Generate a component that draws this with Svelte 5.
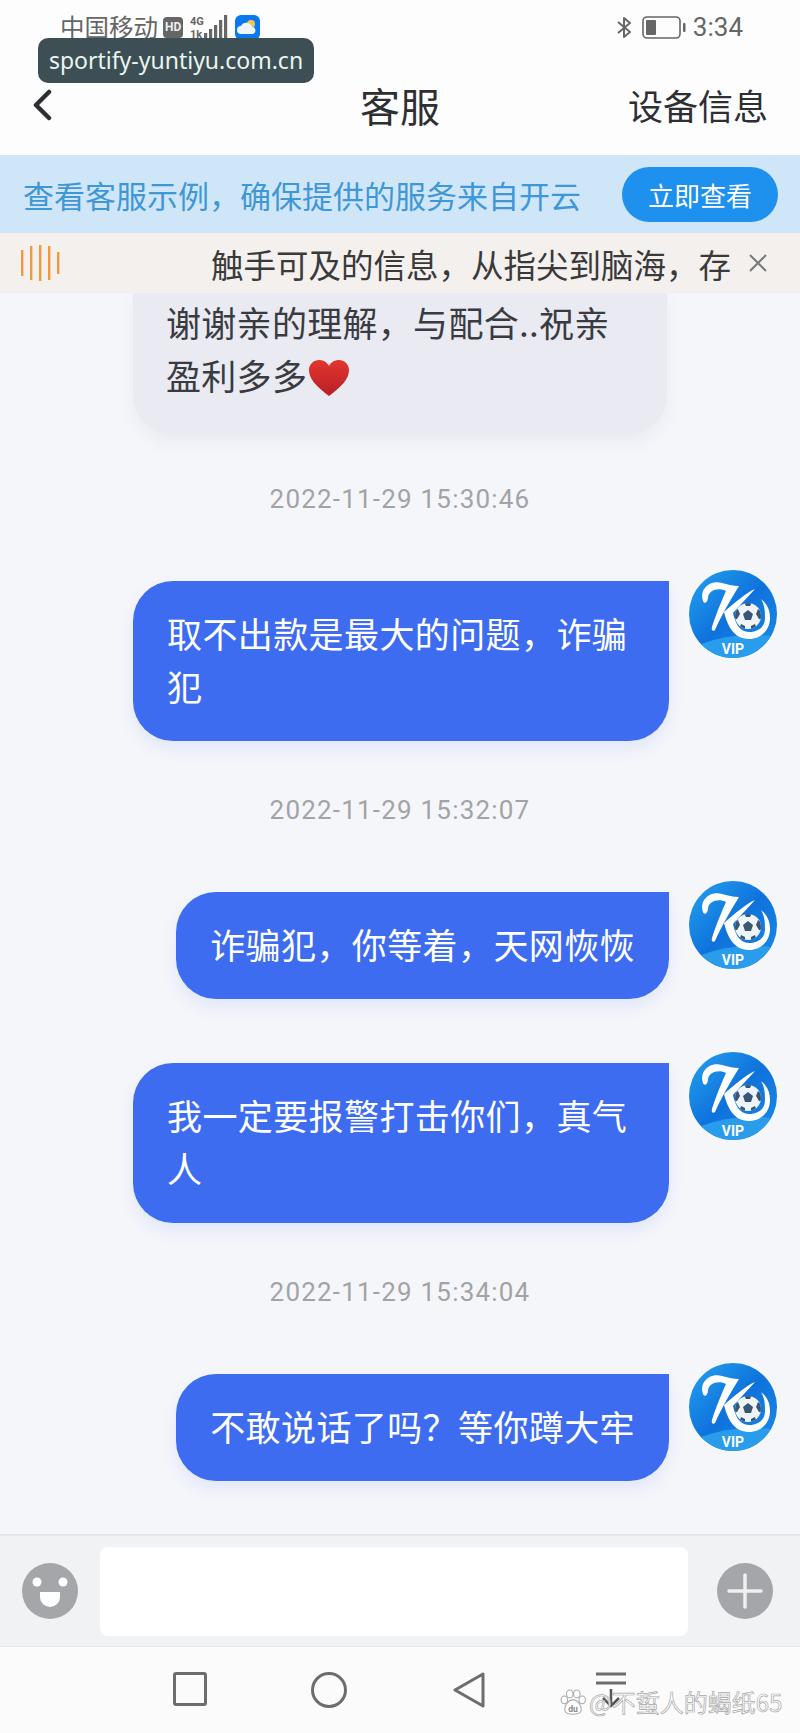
<script>
    const messages = [
        { time: "2022-11-29 15:30:46" },
        { text: "取不出款是最大的问题\uFF0C诈骗犯" },
        { time: "2022-11-29 15:32:07" },
        { text: "诈骗犯\uFF0C你等着\uFF0C天网恢恢" },
        { text: "我一定要报警打击你们\uFF0C真气人" },
        { time: "2022-11-29 15:34:04" },
        { text: "不敢说话了吗\uFF1F等你蹲大牢" }
    ];
    const waveBars = [
        [1, 5, 26], [10, 1, 34], [19, 0, 36], [28, 1, 34], [37, 7, 22]
    ];
</script>

{#snippet avatar()}
    <svg class="avatar" viewBox="0 0 88 88">
        <defs>
            <linearGradient id="avatar-bg" x1="0" y1="0" x2="1" y2="1">
                <stop offset="0" stop-color="#25a2ee" />
                <stop offset="0.5" stop-color="#0f72dc" />
                <stop offset="1" stop-color="#1a8ce8" />
            </linearGradient>
            <clipPath id="ball-clip"><circle cx="59" cy="46" r="13" /></clipPath>
        </defs>
        <circle cx="44" cy="44" r="44" fill="url(#avatar-bg)" />
        <path d="M12 74 Q44 62 82 66 Q68 88 44 88 Q26 88 12 74Z" fill="#2a9cec" />
        <path d="M14 31 C10 18 22 10 33 13 C38 14.5 44 16 50 16 C44 26 34 42 26 60 C24 62 22 60 23 57 C27 44 33 30 37 21 C30 17 19 20 19 28 C18.5 33 15 34 14 31Z" fill="#fff" />
        <path d="M66 19 C58 22 44 34 35 42 C38 54 44 69 60 69 C72 69 81 60 81 48 C81 40 78 34 72 29 C76 36 76 42 76 48 C76 57 69 62 60 62 C50 62 46 52 44 43 C50 36 58 28 66 19Z" fill="#fff" />
        <circle cx="59" cy="46" r="13" fill="#eef3f7" />
        <g fill="#3a5573" clip-path="url(#ball-clip)">
            <polygon points="59,40 64,44 62,50 56,50 54,44" />
            <polygon points="55,32 63,32 61,36 57,36" />
            <polygon points="45,42 49,39 51,44 48,49 45,49" />
            <polygon points="73,42 69,39 67,44 70,49 73,49" />
            <polygon points="50,60 52,54 56,56 56,60" />
            <polygon points="68,60 66,54 62,56 62,60" />
        </g>
        <text class="vip" x="44" y="84" text-anchor="middle">VIP</text>
    </svg>
{/snippet}

<div class="page">
    <div class="top">
        <div class="status">
            <div class="status-left">
                <span class="carrier">中国移动</span>
                <span class="hd">HD</span>
                <svg class="signal" width="38" height="24" viewBox="0 0 38 24">
                    <text class="net" x="0" y="10">4G</text>
                    <text class="net" x="0" y="23">1k</text>
                    <rect x="14" y="18" width="3.2" height="5" fill="#666" />
                    <rect x="19" y="14" width="3.2" height="9" fill="#666" />
                    <rect x="24" y="10" width="3.2" height="13" fill="#666" />
                    <rect x="29" y="5" width="3.2" height="18" fill="#666" />
                    <rect x="34" y="0" width="3.2" height="23" fill="#666" />
                </svg>
                <svg class="weather" width="25" height="25" viewBox="0 0 25 25">
                    <rect width="25" height="25" rx="6" fill="#0a78ee" />
                    <circle cx="16" cy="9" r="4" fill="#f3c558" />
                    <path d="M6 19 a4 4 0 0 1 0-8 a6 6 0 0 1 11 1 a3.6 3.6 0 0 1 1 7Z" fill="#eef5fb" />
                </svg>
            </div>
            <div class="status-right">
                <svg width="17" height="23" viewBox="0 0 17 23">
                    <path d="M2 6 L14 16 L8 21 V2 L14 7 L2 17" fill="none" stroke="#666" stroke-width="2" stroke-linejoin="round" />
                </svg>
                <svg width="44" height="23" viewBox="0 0 44 23">
                    <rect x="1" y="1" width="37" height="21" rx="4" fill="none" stroke="#666" stroke-width="1.6" />
                    <rect x="4" y="4" width="10" height="15" rx="1" fill="#666" />
                    <rect x="41" y="7" width="2.5" height="9" rx="1" fill="#666" />
                </svg>
                <span class="clock">3:34</span>
            </div>
        </div>
        <div class="header">
            <svg class="back" width="20" height="32" viewBox="0 0 20 32">
                <path d="M17 3 L4 16 L17 29" fill="none" stroke="#2d2f33" stroke-width="4.5" stroke-linecap="round" stroke-linejoin="round" />
            </svg>
            <span class="title">客服</span>
            <span class="device">设备信息</span>
        </div>
        <div class="url-badge">sportify-yuntiyu.com.cn</div>
    </div>

    <div class="banner">
        <span class="banner-text">查看客服示例&#xFF0C;确保提供的服务来自开云</span>
        <button class="banner-btn">立即查看</button>
    </div>

    <div class="notice">
        <svg class="wave" width="40" height="36" viewBox="0 0 40 36">
            {#each waveBars as [x, y, h]}
                <rect {x} {y} width="2.4" height={h} fill="#ef9a3c" />
            {/each}
        </svg>
        <span class="notice-text">触手可及的信息&#xFF0C;从指尖到脑海&#xFF0C;存</span>
        <svg class="close" width="18" height="18" viewBox="0 0 18 18">
            <path d="M1 1 L17 17 M17 1 L1 17" stroke="#77797c" stroke-width="2" />
        </svg>
    </div>

    <div class="chat">
        <div class="bubble-in">
            谢谢亲的理解&#xFF0C;与配合..祝亲<br />盈利多多<svg class="heart" width="42" height="38" viewBox="0 0 42 38">
                <defs>
                    <linearGradient id="heart-red" x1="0" y1="0" x2="0" y2="1">
                        <stop offset="0" stop-color="#e2362f" />
                        <stop offset="1" stop-color="#b81f26" />
                    </linearGradient>
                </defs>
                <path d="M21 37 C8 27 1 20 1 11 C1 5 6 1 11 1 C15 1 19 3 21 7 C23 3 27 1 31 1 C36 1 41 5 41 11 C41 20 34 27 21 37Z" fill="url(#heart-red)" />
            </svg>
        </div>

        {#each messages as m}
            {#if m.time}
                <div class="time">{m.time}</div>
            {:else}
                <div class="row">
                    <div class="bubble">{m.text}</div>
                    {@render avatar()}
                </div>
            {/if}
        {/each}
    </div>

    <div class="input-bar">
        <svg width="56" height="56" viewBox="0 0 56 56">
            <circle cx="28" cy="28" r="28" fill="#a4a6a9" />
            <circle cx="15" cy="19" r="4.5" fill="#fff" />
            <circle cx="41" cy="19" r="4.5" fill="#fff" />
            <path d="M18 29 H38 V34 A10 10 0 0 1 18 34Z" fill="#fff" />
        </svg>
        <div class="input"></div>
        <svg width="56" height="56" viewBox="0 0 56 56">
            <circle cx="28" cy="28" r="28" fill="#a4a6a9" />
            <path d="M28 12 V44 M12 28 H44" stroke="#eef0f1" stroke-width="3.5" stroke-linecap="round" />
        </svg>
    </div>

    <div class="nav">
        <svg class="nav-square" width="34" height="34" viewBox="0 0 34 34">
            <rect x="1.5" y="1.5" width="31" height="31" rx="1.5" fill="none" stroke="#6d6d6d" stroke-width="3" />
        </svg>
        <svg class="nav-circle" width="36" height="36" viewBox="0 0 36 36">
            <circle cx="18" cy="18" r="16.5" fill="none" stroke="#6d6d6d" stroke-width="3" />
        </svg>
        <svg class="nav-back" width="32" height="36" viewBox="0 0 32 36">
            <path d="M30 2 V34 L2 18Z" fill="none" stroke="#6d6d6d" stroke-width="3" stroke-linejoin="round" />
        </svg>
        <svg class="nav-menu" width="32" height="36" viewBox="0 0 32 36">
            <path d="M1 2 H31 M1 11 H31" stroke="#6d6d6d" stroke-width="3" />
            <path d="M16 17 V33 M8 26 L16 34 L24 26" fill="none" stroke="#555" stroke-width="2.5" />
        </svg>
        <div class="watermark">
            <svg width="26" height="26" viewBox="0 0 24 24">
                <g fill="#fff" stroke="#a9a9a9" stroke-width="1">
                    <ellipse cx="4" cy="10" rx="3" ry="3.6" />
                    <ellipse cx="9" cy="4.5" rx="3" ry="3.6" />
                    <ellipse cx="15.5" cy="4.5" rx="3" ry="3.6" />
                    <ellipse cx="20.5" cy="10" rx="3" ry="3.6" />
                    <path d="M12 10 C7 10 3 17 5 21 C7 24 17 24 19 21 C21 17 17 10 12 10Z" />
                </g>
                <text class="du" x="12" y="21" text-anchor="middle">du</text>
            </svg>
            <span>@不蜇人的蝎纸65</span>
        </div>
    </div>
</div>

<style>
    :global(body) {
        margin: 0;
    }
    .page {
        position: relative;
        display: flex;
        flex-direction: column;
        width: 800px;
        height: 1733px;
        overflow: hidden;
        font-family: "Noto Sans CJK SC", "Noto Sans", sans-serif;
        background: #f5f6fa;
    }

    .top {
        position: relative;
        flex: none;
        height: 155px;
        box-sizing: border-box;
        padding: 14px 57px 0 60px;
        background: #fdfdfd;
    }
    .status {
        display: flex;
        justify-content: space-between;
        align-items: center;
        height: 26px;
        color: #666;
    }
    .status-left,
    .status-right {
        display: flex;
        align-items: center;
    }
    .carrier {
        font-size: 24.5px;
        line-height: 26px;
    }
    .hd {
        flex: none;
        margin-left: 5px;
        padding: 0 2px;
        border-radius: 4px;
        background: #666;
        color: #eee;
        font: bold 12px/21px "Roboto", sans-serif;
    }
    .signal {
        margin-left: 7px;
    }
    .net {
        font: bold 11px "Roboto", sans-serif;
        fill: #666;
    }
    .weather {
        margin-left: 7px;
    }
    .status-right svg {
        margin-right: 9px;
    }
    .clock {
        margin-left: -2px;
        font: 26px/26px "Roboto", sans-serif;
    }
    .header {
        display: flex;
        align-items: center;
        justify-content: space-between;
        height: 56px;
        margin: 37px -57px 0 -60px;
        padding: 0 32px;
        position: relative;
        color: #2d2f33;
    }
    .title {
        position: absolute;
        left: 360px;
        font-size: 40px;
        line-height: 56px;
    }
    .device {
        font-size: 35px;
        line-height: 56px;
    }
    .url-badge {
        position: absolute;
        left: 38px;
        top: 38px;
        width: 276px;
        height: 45px;
        border-radius: 10px;
        background: #3d4f55;
        color: #e8f6f1;
        font: 23px/45px "Noto Sans", sans-serif;
        text-align: center;
    }

    .banner {
        flex: none;
        display: flex;
        align-items: center;
        justify-content: space-between;
        height: 78px;
        box-sizing: border-box;
        padding: 0 22px 0 23px;
        background: #cfe6f9;
    }
    .banner-text {
        color: #3f97d6;
        font-size: 31px;
    }
    .banner-btn {
        width: 156px;
        height: 55px;
        padding: 0;
        border: none;
        border-radius: 28px;
        background: #1e90ee;
        color: #fff;
        font-family: inherit;
        font-size: 26px;
    }

    .notice {
        flex: none;
        display: flex;
        align-items: center;
        height: 60px;
        box-sizing: border-box;
        padding-left: 20px;
        background: #f4f0ee;
        color: #3a3a3a;
    }
    .notice-text {
        margin-left: 151px;
        width: 525px;
        white-space: nowrap;
        font-size: 32.5px;
    }
    .close {
        margin-left: 13px;
    }

    .chat {
        flex: 1;
        min-height: 0;
        overflow: hidden;
    }
    .bubble-in {
        box-sizing: border-box;
        width: 534px;
        height: 142px;
        margin: 0 0 -5px 133px;
        padding: 2px 33px 0;
        border-radius: 0 0 40px 40px;
        background: #e9eaf2;
        box-shadow: 0 8px 16px rgba(120, 125, 160, 0.08);
        color: #3a3b40;
        font-size: 35px;
        letter-spacing: 0.3px;
        line-height: 53px;
    }
    .heart {
        vertical-align: -7px;
        margin-left: 1px;
    }
    .time {
        height: 30px;
        margin: 54px 0 67px;
        color: #a3a3a5;
        font: 26px/30px "Roboto", sans-serif;
        letter-spacing: 1.2px;
        text-align: center;
    }
    .row {
        display: flex;
        justify-content: flex-end;
        align-items: flex-start;
        gap: 20px;
        padding-right: 23px;
    }
    .row + .row {
        margin-top: 64px;
    }
    .bubble {
        box-sizing: border-box;
        max-width: 536px;
        padding: 25px 34px 29px;
        border-radius: 40px 0 40px 40px;
        background: #3e6cf0;
        box-shadow: 0 8px 16px rgba(62, 108, 240, 0.1);
        color: #fff;
        font-size: 35px;
        letter-spacing: 0.4px;
        line-height: 53px;
    }
    .avatar {
        flex: none;
        width: 88px;
        height: 88px;
        margin-top: -11px;
    }
    .vip {
        font: bold 14px "Roboto", sans-serif;
        fill: #fff;
    }

    .input-bar {
        flex: none;
        display: flex;
        align-items: center;
        height: 113px;
        box-sizing: border-box;
        padding: 0 27px 0 22px;
        border-top: 2px solid #e4e5e7;
        border-bottom: 1px solid #e4e5e7;
        background: #f1f2f3;
    }
    .input {
        width: 588px;
        height: 89px;
        margin: 0 29px 0 22px;
        border-radius: 8px;
        background: #fff;
    }

    .nav {
        position: relative;
        flex: none;
        height: 86px;
        box-sizing: border-box;
        padding-top: 25px;
        display: flex;
        align-items: flex-start;
        background: #fbfbfc;
    }
    .nav-square {
        margin-left: 173px;
    }
    .nav-circle {
        margin-left: 104px;
    }
    .nav-back {
        margin-left: 106px;
    }
    .nav-menu {
        margin-left: 110px;
    }
    .watermark {
        position: absolute;
        left: 560px;
        top: 41px;
        display: flex;
        align-items: center;
        gap: 3px;
        color: #fff;
        font-size: 24px;
        line-height: 28px;
        -webkit-text-stroke: 0.7px #a8a8a8;
    }
    .du {
        font: bold 8px "Roboto", sans-serif;
        fill: #888;
        stroke: none;
    }
</style>
